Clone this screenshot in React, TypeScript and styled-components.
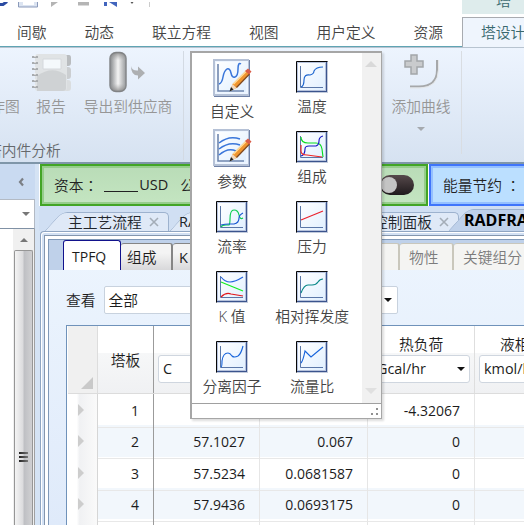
import React from "react";
import styled, { createGlobalStyle, css } from "styled-components";

const Global = createGlobalStyle`
  * { box-sizing: border-box; }
  body { margin: 0; overflow: hidden; background: #fff; }
`;

const Window = styled.div`
  position: relative;
  display: flex;
  flex-direction: column;
  width: 524px;
  height: 525px;
  overflow: hidden;
  background: #fff;
  color: #1c1c1c;
  font: 350 14.75px/20px "Open Sans", "Noto Sans CJK SC", sans-serif;
  white-space: nowrap;
`;

/* ---------- title strip and ribbon ---------- */

const TitleStrip = styled.div`
  display: flex;
  justify-content: space-between;
  height: 17px;
  flex: none;
`;

const QuickAccess = styled.div`
  width: 160px;
  height: 14px;
  overflow: hidden;
`;

const ContextHeader = styled.div`
  width: 62px;
  height: 14px;
  overflow: hidden;
  background: #deecec;
  color: #38686e;
  padding-left: 34px;
  line-height: 0;
`;

const MenuTabs = styled.nav`
  display: flex;
  height: 31px;
  flex: none;
  padding-left: 17px;
  gap: 38px;
  color: #444;
  border-bottom: 1px solid #b8c4d0;
`;

const MenuTab = styled.div<{ $active?: boolean }>`
  position: relative;
  line-height: 30px;
  ${(p) =>
    p.$active
      ? css`
          width: 70px;
          margin-left: -19px;
          padding-left: 18px;
          color: #38686e;
          background: #eff5fd;
          border: 1px solid #a8abb0;
          border-width: 1px 0 0 1px;
          line-height: 29px;
        `
      : css`
          &::after {
            content: "";
            position: absolute;
            left: -20px;
            right: -20px;
            bottom: 0;
            height: 1px;
            background: #5fa4b4;
          }
        `}
`;

const Ribbon = styled.section`
  display: flex;
  height: 116px;
  flex: none;
  background: linear-gradient(#edf4fe, #d6e2f1);
  border-bottom: 2px solid #7f96a9;
  color: #969696;
`;

const ReportGroup = styled.div`
  width: 184px;
  height: 109px;
  margin-top: 3px;
  border-right: 1px solid #d3dae3;
  display: flex;
  flex-direction: column;
  justify-content: space-between;
`;

const ButtonRow = styled.div`
  display: flex;
`;

const RibbonButton = styled.div<{ $w: number; $shift?: number }>`
  width: ${(p) => p.$w}px;
  margin-left: ${(p) => p.$shift ?? 0}px;
  display: flex;
  flex: none;
  flex-direction: column;
  align-items: center;
  svg { display: block; height: 44px; margin-bottom: 1px; }
`;

const GroupLabel = styled.div`
  color: #66696c;
  margin: 0 0 0 -13px;
`;

const CurveGroup = styled.div`
  width: 83px;
  height: 103px;
  margin: 3px 0 0 195px;
  border-right: 1px solid #d9dde2;
`;

const DownMark = styled.i<{ $c?: string }>`
  display: block;
  flex: none;
  border: 4px solid transparent;
  border-top-color: ${(p) => p.$c ?? "#111"};
  border-bottom: 0;
`;

const ButtonMark = styled(DownMark)`
  margin-top: 11px;
`;

/* ---------- lower area ---------- */

const Body = styled.div`
  display: flex;
  flex: 1;
  min-height: 0;
  background: #d5e3f4;
`;

const SidePane = styled.aside`
  width: 35px;
  flex: none;
  display: flex;
  flex-direction: column;
`;

const SideHeader = styled.div`
  height: 35px;
  flex: none;
  display: flex;
  align-items: center;
  justify-content: flex-end;
  padding-right: 10px;
  background: #c9daf1;
`;

const SideCombo = styled.div`
  height: 30px;
  flex: none;
  display: flex;
  align-items: center;
  justify-content: flex-end;
  padding-right: 4px;
  background: #fff;
  border: 1px solid #b3bac4;
  border-left: 0;
  border-bottom-color: #8091a5;
`;

const SideTree = styled.div`
  flex: 1;
  display: flex;
  justify-content: flex-end;
  background: #fff;
`;

const ScrollBar = styled.div`
  width: 22px;
  background: #f0f0f0;
  display: flex;
  flex-direction: column;
  align-items: center;
  border-right: 1px solid #a0a0a0;
`;

const UpArrow = styled.i`
  margin: 9px 0 8px;
  border: 4px solid transparent;
  border-bottom-color: #777;
  border-top: 0;
`;

const Thumb = styled.div`
  flex: 1;
  width: 19px;
  border: 1px solid #969696;
  border-bottom: 0;
  border-radius: 2px 2px 0 0;
  background: linear-gradient(90deg, #f4f4f4, #dcdcde 45%, #bfc0c4 55%, #d0d0d2);
  display: flex;
  flex-direction: column;
  align-items: center;
  padding-top: 201px;
  gap: 2px;
`;

const GripLine = styled.i`
  width: 9px;
  height: 2px;
  background: linear-gradient(90deg, #222, #777);
`;

const Main = styled.main`
  flex: 1;
  min-width: 0;
  margin-left: 4px;
  display: flex;
  flex-direction: column;
`;

const Gauges = styled.div`
  display: flex;
  height: 42px;
  flex: none;
  gap: 1px;
  background: #fff;
  padding-left: 1px;
`;

const Gauge = styled.div<{ $tone: "green" | "blue" }>`
  display: flex;
  flex: none;
  align-items: center;
  height: 42px;
  color: #222;
  border: 2px solid ${(p) => (p.$tone === "green" ? "#42a525" : "#3f75fb")};
  box-shadow: inset 0 0 0 2px ${(p) => (p.$tone === "green" ? "#96cd8c" : "#94c0ff")};
  background: ${(p) => (p.$tone === "green" ? "linear-gradient(#b9dcb7, #c4e5c1)" : "#bbdfff")};
  width: ${(p) => (p.$tone === "green" ? 388 : 110)}px;
  padding-left: 12px;
`;

const Colon = styled.span`
  font-family: "Noto Sans CJK TC", sans-serif;
`;

const Latin = styled.span`
  font-size: 14.5px;
  font-weight: 400;
`;

const Blank = styled.span`
  width: 34px;
  height: 13px;
  margin: 0 1px 0 6px;
  border-bottom: 1px solid #222;
`;

const GaugeNext = styled.span`
  margin-left: 12px;
`;

const Toggle = styled.span`
  width: 34px;
  height: 20px;
  margin-left: auto;
  margin-right: 12px;
  border-radius: 10px;
  background: linear-gradient(#56494b, #1f1a1c);
  &::before {
    content: "";
    display: block;
    width: 16px;
    height: 16px;
    margin: 2px 0 2px 1px;
    border-radius: 50%;
    background: #c4c4c4;
  }
`;

const DocTabs = styled.div`
  display: flex;
  height: 25px;
  flex: none;
  padding-left: 5px;
  background: #d0dff3;
`;

const DocTab = styled.div<{ $w: number; $pad?: number; $active?: boolean }>`
  position: relative;
  isolation: isolate;
  display: flex;
  align-items: center;
  flex: none;
  width: ${(p) => p.$w}px;
  height: ${(p) => (p.$active ? 22 : 19)}px;
  margin-top: ${(p) => (p.$active ? 3 : 6)}px;
  margin-left: ${(p) => (p.$active ? -10 : 0)}px;
  padding-left: ${(p) => p.$pad ?? 24}px;
  line-height: 18px;
  color: #20242a;
  ${(p) => p.$active && "font-size: 16px; font-weight: 700; color: #000;"}
  &::before, &::after {
    content: "";
    position: absolute;
    z-index: -1;
    top: 0;
    bottom: 0;
    border: 1px solid #9db2ce;
    background: ${(p) => (p.$active ? "#bfd1ea" : "#dfe9f7")};
  }
  &::before {
    left: 9px;
    width: 50%;
    transform: skewX(-42deg);
    border-width: 1px 0 0 1px;
    border-radius: 6px 0 0 0;
  }
  &::after {
    left: 26px;
    right: 0;
    border-width: 1px 1px 0 0;
    border-radius: 0 5px 0 0;
  }
  svg { margin-left: auto; margin-right: 10px; }
`;

const Frame = styled.div`
  flex: 1;
  min-height: 0;
  margin-left: 1px;
  border: 1px solid #8fa5c2;
  border-width: 1px 0 0 1px;
  border-radius: 4px 0 0 0;
  padding: 3px 0 0 3px;
  background: #d3e1f4;
  box-shadow: inset 1px 1px #fff;
  display: flex;
`;

const FrameInner = styled.div`
  flex: 1;
  min-width: 0;
  border: 1px solid #8496ae;
  border-width: 1px 0 0 1px;
  padding: 3px 0 0 3px;
  background: #fff;
  display: flex;
`;

const Sheet = styled.div`
  flex: 1;
  min-width: 0;
  border: 1px solid #7f98b8;
  border-width: 1px 0 0 1px;
  display: flex;
  flex-direction: column;
  background: linear-gradient(#edf5fe, #dfeafa);
`;

const SheetTabs = styled.div`
  display: flex;
  height: 30px;
  flex: none;
  padding-left: 14px;
  align-items: flex-end;
  background: #bfd1ea;
`;

const SheetTab = styled.div<{ $w: number; $state?: "active" | "off" }>`
  width: ${(p) => p.$w}px;
  flex: none;
  height: 27px;
  padding-left: 6px;
  line-height: 27px;
  border: 1px solid #858585;
  border-width: 1px 2px 0 0;
  border-radius: 3px 3px 0 0;
  background: linear-gradient(#f4f4f4 35%, #d8d8da);
  ${(p) =>
    p.$state === "active" &&
    css`
      height: 30px;
      padding-left: 8px;
      font-size: 14px;
      font-weight: 400;
      line-height: 31px;
      background: #fff;
      border: 1px solid #12128c;
      border-bottom: 0;
    `}
  ${(p) =>
    p.$state === "off" &&
    css`
      color: #7c7c7c;
      padding-left: 9px;
      border-color: #c9c7bc;
      background: #f4f4f2;
    `}
`;

const Filter = styled.div`
  display: flex;
  align-items: center;
  height: 55px;
  flex: none;
  padding: 4px 0 0 17px;
`;

const FilterSelect = styled.div`
  display: flex;
  align-items: center;
  justify-content: space-between;
  width: 294px;
  height: 28px;
  margin-left: 8px;
  padding: 0 5px 0 4px;
  background: #fff;
  border: 1px solid #c8d2de;
  border-radius: 2px;
`;

const Table = styled.div`
  flex: 1;
  margin-left: 17px;
  border: 1px solid #6f92ba;
  border-width: 1px 0 0 1px;
  padding-left: 1px;
  background: #fff;
  overflow: hidden;
`;

const columns = css`
  display: grid;
  grid-template-columns: 30px 56px 106px 108px 107px 110px;
`;

const HeadRow = styled.div`
  ${columns}
  height: 68px;
  background: linear-gradient(#fff 40%, #f6f7f8 41%, #f0f1f3);
  border-bottom: 1px solid #dcdcdc;
`;

const HeadCell = styled.div<{ $dark?: boolean }>`
  display: flex;
  flex-direction: column;
  justify-content: flex-end;
  align-items: center;
  padding: 0 4px 10px;
  border-right: 1px solid ${(p) => (p.$dark ? "#9b9b9b" : "#dedede")};
`;

const StageHead = styled(HeadCell)`
  padding-bottom: 23px;
`;

const Corner = styled.div`
  display: flex;
  justify-content: flex-end;
  align-items: flex-end;
  padding: 0 4px 4px 0;
  background: #f0f0f0;
  border-right: 1px solid #ddd;
  &::after {
    content: "";
    border: 6px solid #c9c9c9;
    border-top-color: transparent;
    border-left-color: transparent;
  }
`;

const UnitSelect = styled.div`
  display: flex;
  align-items: center;
  justify-content: space-between;
  width: 100%;
  height: 28px;
  margin-top: 1px;
  padding: 0 4px;
  font-size: 14.4px;
  font-weight: 400;
  background: #fff;
  border: 1px solid #cfd6df;
  border-radius: 3px;
`;

const DataRow = styled.div<{ $alt: boolean }>`
  ${columns}
  height: 31.3px;
  background: ${(p) => (p.$alt ? "#f2f7fc" : "#fff")};
`;

const Cell = styled.div<{ $dark?: boolean }>`
  text-align: right;
  padding-right: 14px;
  font-size: 14px;
  font-weight: 400;
  line-height: 33px;
  border-right: 1px solid ${(p) => (p.$dark ? "#9b9b9b" : "#e6e6e6")};
  border-bottom: 1px solid #e8e8e8;
`;

const RowHandle = styled.div`
  display: flex;
  align-items: center;
  padding-left: 10px;
  background: linear-gradient(90deg, #fff 30%, #f0f1f3 40%, #fafafa);
  border-right: 1px solid #d6d6d6;
  border-bottom: 2px solid #d6d6d6;
  &::before {
    content: "";
    border: 6px solid transparent;
    border-left-color: #cdcdcd;
    border-right: 0;
  }
`;

/* ---------- gallery popup ---------- */

const Gallery = styled.div`
  position: absolute;
  left: 190px;
  top: 51px;
  width: 192px;
  height: 368px;
  display: flex;
  flex-direction: column;
  background: #fff;
  border: 2px solid #a6a6a6;
  border-width: 2px 1px 1px 2px;
  box-shadow: 2px 2px 2px #0002;
`;

const GalleryBody = styled.div`
  display: flex;
  flex: 1;
`;

const GalleryGrid = styled.div`
  display: grid;
  grid-template-columns: 80px 80px;
  grid-auto-rows: 70px;
  width: 170px;
  height: 350px;
`;

const GalleryItem = styled.div<{ $large?: boolean }>`
  display: flex;
  flex-direction: column;
  align-items: center;
  color: #444;
  padding-top: ${(p) => (p.$large ? 6 : 8)}px;
  svg { display: block; flex: none; }
  span { margin-top: ${(p) => (p.$large ? 4 : 3)}px; }
`;

const GalleryScroll = styled.div`
  width: 19px;
  display: flex;
  flex-direction: column;
  justify-content: space-between;
  align-items: center;
  padding: 8px 2px 9px 0;
  background: #f1f1f1;
`;

const ScrollMark = styled.i<{ $up?: boolean }>`
  border: 6px solid transparent;
  ${(p) =>
    p.$up
      ? "border-bottom-color: #d9d9d9; border-top: 0;"
      : "border-top-color: #e0e0e0; border-bottom: 0;"}
`;

const GalleryFoot = styled.div`
  height: 15px;
  border-top: 1px solid #a0a0a0;
  display: flex;
  justify-content: flex-end;
  padding: 3px 2px 0 0;
`;

/* ---------- drawings ---------- */

type Curve = [string, string];

const ChartIcon = ({ curves }: { curves: Curve[] }) => (
  <svg width="32" height="32" viewBox="0 0 32 32" fill="none">
    <defs>
      <linearGradient id="plate" x1="0" y1="0" x2="1" y2="1">
        <stop stopColor="#fff" />
        <stop offset="1" stopColor="#e1f0ff" />
      </linearGradient>
    </defs>
    <path d="M0 0h32v32H0z" fill="#c3cbdc" />
    <path d="M.5 31.5V.5h31" stroke="#080808" />
    <path d="M1 1h30v30H1z" fill="#3b548d" />
    <path d="M1 1h29v29H1z" fill="#b6c2dc" />
    <path d="M2 2h27v27H2z" fill="url(#plate)" />
    <path d="M4.5 5v21.5H27" stroke="#5a77a8" />
    {curves.map(([color, d]) => (
      <path key={color + d} d={d} stroke={color} strokeWidth="1.15" />
    ))}
  </svg>
);

const EditChartIcon = ({ paths }: { paths: string[] }) => (
  <svg width="39" height="38" viewBox="0 0 39 38" fill="none">
    <path d="M1 1h36v37H1z" fill="#6f81a6" />
    <path d="M0 0h36v37H0z" fill="#b5c1d6" />
    <path d="M2 2h33v33H2z" fill="#edf5ff" />
    <path d="M3 3h30v30H3z" fill="url(#plate)" />
    <path d="M5 5v27h26" stroke="#7087af" strokeWidth="1.6" />
    {paths.map((d) => (
      <path key={d} d={d} stroke="#3976da" strokeWidth="1.5" />
    ))}
    <path d="M17 32l2.500-7L33 11.500l4 3.500-13.500 14z" fill="#f0962f" />
    <path d="M23.500 28.500L36.500 15" stroke="#7d4a25" strokeWidth="1.200" />
    <path d="M20.500 25L33.500 12" stroke="#ffdf9d" strokeWidth="1.500" />
    <path d="M32 12l3-2.500 3.500 3-2.500 3z" fill="#d95d48" />
    <path d="M17 32l2.500-7 4 4z" fill="#f1d9bd" />
    <path d="M16.500 32.500l1.500-4.500 2.500 2.500z" fill="#222" />
  </svg>
);

const ReportIcon = () => (
  <svg width="40" height="44" viewBox="0 0 40 44" fill="none">
    <path d="M35 4h3q2 0 2 3v5q0 3-3 3h-3z" fill="#b9bcbf" />
    <path d="M35 16h2q3 0 3 3v6q0 3-3 3h-3z" fill="#cbced1" />
    <path d="M35 29h2q3 0 3 3v5q0 3-3 3h-3z" fill="#dadddf" />
    <rect x="4" y="3" width="32" height="37" rx="3" fill="#e0e3e5" />
    <path d="M6 25q15-11 29-1v13q0 3-3 3H6z" fill="#cfd2d4" />
    <path d="M12 8h18v10H12z" fill="#f5f9fc" stroke="#d5d8dc" />
    <path d="M1 6h6M1 12h6M1 18h6M1 24h6M1 30h6M1 36h6" stroke="#a9acaf" strokeWidth="2" />
    <path d="M4 4v35" stroke="#fafafa" strokeDasharray="2 4" />
  </svg>
);

const ExportIcon = () => (
  <svg width="38" height="44" viewBox="0 0 38 44" fill="none">
    <defs>
      <linearGradient id="vessel">
        <stop stopColor="#85888b" />
        <stop offset=".5" stopColor="#f4f4f4" />
        <stop offset="1" stopColor="#96999c" />
      </linearGradient>
      <linearGradient id="vesselCap" x2="0" y2="1">
        <stop stopColor="#777" stopOpacity=".75" />
        <stop offset=".2" stopColor="#999" stopOpacity="0" />
        <stop offset=".8" stopColor="#999" stopOpacity="0" />
        <stop offset="1" stopColor="#777" stopOpacity=".75" />
      </linearGradient>
    </defs>
    <rect x="1" y="1.500" width="16" height="39" rx="6" fill="url(#vessel)" stroke="#85888b" strokeWidth="1.500" />
    <rect x="1" y="1.500" width="16" height="39" rx="6" fill="url(#vesselCap)" />
    <path d="M22 15q1 5 7 4.500v-4l7 6.500-7 6.500v-4q-7 0-7-9.500z" fill="#adafb1" />
  </svg>
);

const AddCurveIcon = () => (
  <svg width="36" height="44" viewBox="0 0 36 44" fill="none">
    <path d="M8 4h6v6h6v6h-6v7H8v-7H2v-6h6z" fill="#c9cbcd" stroke="#a3a6a9" strokeWidth="1.500" />
    <path d="M34 9v10Q34 35.500 16 35.500H7" stroke="#a6a8aa" strokeWidth="2" />
    <path d="M35.500 9v10Q35 36.500 17 37H7" stroke="#e4e6e8" />
  </svg>
);

const QuickIcons = () => (
  <svg width="160" height="14" viewBox="0 0 160 14" fill="none">
    <path d="M0 2.500h3l4-3" stroke="#2b4ba2" strokeWidth="3" />
    <path d="M18.500 0v5h19V0" fill="#dce4f1" stroke="#8b9aba" />
    <path d="M23 0h11v3H23z" fill="#fff" />
    <path d="M51 0h7l-7 5z" fill="#b4b4b4" />
    <path d="M78 0h11v3.500H78z" fill="#b5b5b5" />
    <path d="M104 0h3v4h-3zM109 0h8v5z" fill="#4265bd" />
    <path d="M130.500 0h3l-1.500 2z" fill="#555" />
    <path d="M149.500 0v5" stroke="#ccc" />
    <path d="M0 13.500h82" stroke="#aaa" />
    <path d="M82 13.500h18" stroke="#a9ccda" />
  </svg>
);

const CloseMark = () => (
  <svg width="10" height="10" viewBox="0 0 10 10">
    <path d="M1 1l8 8M9 1L1 9" stroke="#a4adb7" strokeWidth="1.600" />
  </svg>
);

const CollapseMark = () => (
  <svg width="7" height="10" viewBox="0 0 7 10" fill="none">
    <path d="M5 1.500L2 5l3 3.500" stroke="#7b7f85" strokeWidth="2.200" />
  </svg>
);

const ResizeGrip = () => (
  <svg width="9" height="9" viewBox="0 0 9 9" fill="#909090">
    <path d="M6 1h2v2H6zM6 6h2v2H6zM1 6h2v2H1z" />
  </svg>
);

/* ---------- data ---------- */

const menu = ["间歇", "动态", "联立方程", "视图", "用户定义", "资源"];

const gallery: { label: string; edit?: string[]; curves?: Curve[] }[] = [
  { label: "自定义", edit: ["M6 25q3-1 4-7t4-8q3-1 4 4t4 4q3-1 3-8t3-5"] },
  { label: "温度", curves: [["#1963ce", "M5 26q3-1 3-7t6-5q4-1 4-4 2-4 9-4"]] },
  { label: "参数", edit: ["M6 14q10-8 21-4", "M6 20q10-8 21-4", "M6 26q9-8 17-4"] },
  {
    label: "组成",
    curves: [
      ["#09db22", "M5 6q0 6 7 6h8q5 0 6 6l1 8"],
      ["#1717c3", "M5 25q4-1 4-7 0-3 4-3h7q3-1 3-5 0-4 4-5"],
      ["#f02525", "M5 14v6q0 4 6 4l15 2"],
    ],
  },
  {
    label: "流率",
    curves: [
      ["#0bce51", "M5 26q1-2 5-2h3q1-1 1-6 0-9 4-9 4 0 5 5t4 3"],
      ["#1556d1", "M5 24q4-1 8-1h5q5-1 5-6 0-3 4-5"],
    ],
  },
  { label: "压力", curves: [["#ea202c", "M5 19l22-9"]] },
  {
    label: "K 值",
    curves: [
      ["#2363df", "M5 6q4 5 9 5t13-5"],
      ["#10ed21", "M5 11l22 9"],
      ["#e2171d", "M5 26q5-5 10-3l12 2"],
    ],
  },
  { label: "相对挥发度", curves: [["#078787", "M5 22q3-8 7-8h4q4 0 6-3t5-3"]] },
  { label: "分离因子", curves: [["#1764db", "M5 26q1 0 1-6 1-8 6-8 2 0 4 3 2 2 6 0 3-2 5-10"]] },
  { label: "流量比", curves: [["#1764db", "M5 22q2-2 4-12l6 6 12-10"]] },
];

const rows = [
  ["1", "", "", "-4.32067"],
  ["2", "57.1027", "0.067", "0"],
  ["3", "57.5234", "0.0681587", "0"],
  ["4", "57.9436", "0.0693175", "0"],
  ["", "", "", ""],
];

export default function App() {
  return (
    <Window>
      <Global />
      <TitleStrip>
        <QuickAccess><QuickIcons /></QuickAccess>
        <ContextHeader>塔</ContextHeader>
      </TitleStrip>
      <MenuTabs>
        {menu.map((m) => <MenuTab key={m}>{m}</MenuTab>)}
        <MenuTab $active>塔设计</MenuTab>
      </MenuTabs>
      <Ribbon>
        <ReportGroup>
          <ButtonRow>
            <RibbonButton $w={32} $shift={-11}><svg width="1" />作图</RibbonButton>
            <RibbonButton $w={32} $shift={14}><ReportIcon />报告</RibbonButton>
            <RibbonButton $w={90} $shift={16}><ExportIcon />导出到供应商</RibbonButton>
          </ButtonRow>
          <GroupLabel>塔内件分析</GroupLabel>
        </ReportGroup>
        <CurveGroup>
          <RibbonButton $w={64} $shift={10}>
            <AddCurveIcon />添加曲线<ButtonMark $c="#a5a9ae" />
          </RibbonButton>
        </CurveGroup>
      </Ribbon>
      <Body>
        <SidePane>
          <SideHeader><CollapseMark /></SideHeader>
          <SideCombo><DownMark $c="#777" /></SideCombo>
          <SideTree>
            <ScrollBar>
              <UpArrow />
              <Thumb><GripLine /><GripLine /><GripLine /></Thumb>
            </ScrollBar>
          </SideTree>
        </SidePane>
        <Main>
          <Gauges>
            <Gauge $tone="green">
              资本<Colon>：</Colon><Blank /><Latin>USD</Latin><GaugeNext>公</GaugeNext><Toggle />
            </Gauge>
            <Gauge $tone="blue">能量节约&nbsp;<Colon>：</Colon></Gauge>
          </Gauges>
          <DocTabs>
            <DocTab $w={125}>主工艺流程<CloseMark /></DocTab>
            <DocTab $w={168} $pad={10}><Latin>RADFRAC</Latin></DocTab>
            <DocTab $w={122} $pad={36}>控制面板<CloseMark /></DocTab>
            <DocTab $w={140} $pad={15} $active>RADFRAC</DocTab>
          </DocTabs>
          <Frame>
            <FrameInner>
              <Sheet>
                <SheetTabs>
                  <SheetTab $w={58} $state="active">TPFQ</SheetTab>
                  <SheetTab $w={52}>组成</SheetTab>
                  <SheetTab $w={60}><Latin>K</Latin> 值</SheetTab>
                  <SheetTab $w={110} />
                  <SheetTab $w={57} $state="off">流率</SheetTab>
                  <SheetTab $w={54} $state="off">物性</SheetTab>
                  <SheetTab $w={90} $state="off">关键组分</SheetTab>
                </SheetTabs>
                <Filter>查看<FilterSelect>全部<DownMark /></FilterSelect></Filter>
                <Table>
                  <HeadRow>
                    <Corner />
                    <StageHead $dark>塔板</StageHead>
                    <HeadCell>温度<UnitSelect>C<DownMark /></UnitSelect></HeadCell>
                    <HeadCell>压力<UnitSelect>bar<DownMark /></UnitSelect></HeadCell>
                    <HeadCell>热负荷<UnitSelect>Gcal/hr<DownMark /></UnitSelect></HeadCell>
                    <HeadCell>液相流率<UnitSelect>kmol/hr<DownMark /></UnitSelect></HeadCell>
                  </HeadRow>
                  {rows.map(([stage, temp, pressure, duty], i) => (
                    <DataRow key={i} $alt={i % 2 === 1}>
                      <RowHandle />
                      <Cell $dark>{stage}</Cell>
                      <Cell>{temp}</Cell>
                      <Cell>{pressure}</Cell>
                      <Cell>{duty}</Cell>
                      <Cell />
                    </DataRow>
                  ))}
                </Table>
              </Sheet>
            </FrameInner>
          </Frame>
        </Main>
      </Body>
      <Gallery>
        <GalleryBody>
          <GalleryGrid>
            {gallery.map((g) => (
              <GalleryItem key={g.label} $large={!!g.edit}>
                {g.edit ? <EditChartIcon paths={g.edit} /> : <ChartIcon curves={g.curves!} />}
                <span>{g.label}</span>
              </GalleryItem>
            ))}
          </GalleryGrid>
          <GalleryScroll><ScrollMark $up /><ScrollMark /></GalleryScroll>
        </GalleryBody>
        <GalleryFoot><ResizeGrip /></GalleryFoot>
      </Gallery>
    </Window>
  );
}
